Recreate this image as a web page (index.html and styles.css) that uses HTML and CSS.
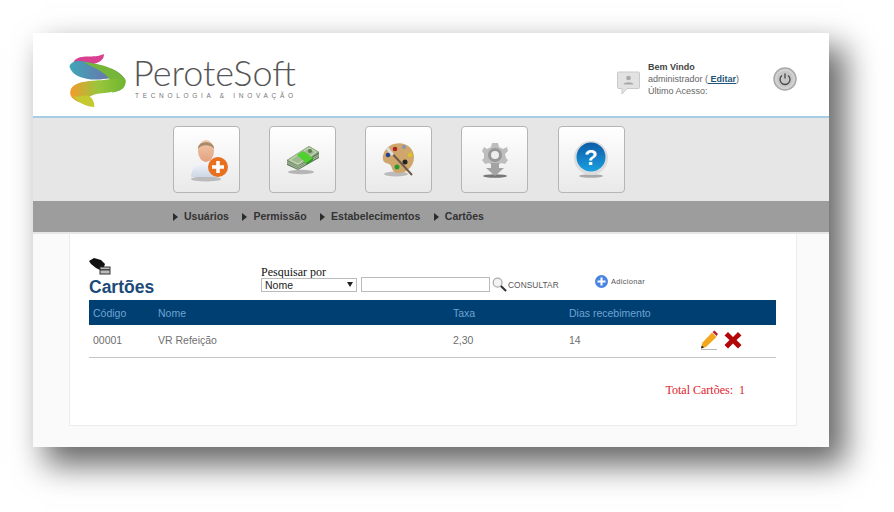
FILE: index.html
```html
<!DOCTYPE html>
<html lang="pt">
<head>
    <meta charset="UTF-8">
    <title>PeroteSoft - Cartões</title>
    <link rel="stylesheet" href="styles.css">
</head>
<body>
<div class="window">
    <header class="top">
        <div class="logo">
            <svg class="logo-mark" width="60" height="54" viewBox="3 0 55 52">
                <defs>
                    <linearGradient id="lgBlue" x1="0" y1="0" x2="1" y2="0">
                        <stop offset="0" stop-color="#3fa6b8"/>
                        <stop offset="1" stop-color="#7c62a8"/>
                    </linearGradient>
                    <linearGradient id="lgGreen" x1="0" y1="0" x2="1" y2="0">
                        <stop offset="0" stop-color="#f39a2c"/>
                        <stop offset="0.5" stop-color="#9ac63c"/>
                        <stop offset="1" stop-color="#6fb52f"/>
                    </linearGradient>
                </defs>
                <path d="M7 8 C14 0 26 6 36 1 C37 5 33 9 28 10 L12 13 Z" fill="#d9408f"/>
                <path d="M3 13 C5 6 16 7 26 10 C40 14 53 17 57 26 C50 24 44 24 36 25 C22 27 6 24 3 13 Z" fill="url(#lgBlue)"/>
                <path d="M16 9 C30 10 50 14 57 26 C58 34 52 37 44 38 C48 30 42 20 16 9 Z" fill="#74b53a"/>
                <path d="M57 26 C57 36 44 38 32 39 C24 40 18 43 20 50 C11 47 2 44 4 36 C7 27 22 27 36 26 C44 25 51 24 57 26 Z" fill="url(#lgGreen)"/>
                <path d="M17 41 C24 40 27 46 27 52 C20 52 11 48 6 41 C9 43 13 42 17 41 Z" fill="#c3c92f"/>
            </svg>
            <div class="logo-text">
                <div class="logo-name">PeroteSoft</div>
                <div class="logo-tag">TECNOLOGIA &amp; INOVAÇÃO</div>
            </div>
        </div>
        <div class="user">
            <svg class="user-icon" width="23" height="24" viewBox="0 0 23 24">
                <path d="M1.5 1 H21.5 A1 1 0 0 1 22.500 2 V16.500 A1 1 0 0 1 21.500 17.500 H10 L5 23 V17.500 H1.500 A1 1 0 0 1 0.500 16.500 V2 A1 1 0 0 1 1.500 1 Z" fill="#e2e2e2" stroke="#c9c9c9"/>
                <circle cx="11.500" cy="7" r="2.300" fill="#a9a9a9"/>
                <path d="M6.500 13.500 C7 10.500 16 10.500 16.500 13.500 Z" fill="#a9a9a9"/>
            </svg>
            <div class="user-text">
                <div class="user-hello">Bem Vindo</div>
                <div>administrador (<a class="user-link" href="#">&nbsp;Editar</a>)</div>
                <div>Último Acesso:</div>
            </div>
            <svg class="power" width="24" height="24" viewBox="0 0 24 24">
                <circle cx="12" cy="12" r="11" fill="#d2d2d2" stroke="#a9a9a9" stroke-width="1.500"/>
                <circle cx="12" cy="12" r="8" fill="#c6c6c6"/>
                <path d="M9 8.500 A5 5 0 1 0 15 8.500" fill="none" stroke="#444" stroke-width="1.300"/>
                <path d="M12 6.500 V11.500" stroke="#444" stroke-width="1.300"/>
            </svg>
        </div>
    </header>

    <div class="band">
        <a class="tile" href="#">
            <svg width="44" height="46" viewBox="0 0 44 46">
                <defs>
                    <linearGradient id="lgFace" x1="0" y1="0" x2="0" y2="1">
                        <stop offset="0" stop-color="#f3c9ac"/>
                        <stop offset="1" stop-color="#e2a27f"/>
                    </linearGradient>
                    <linearGradient id="lgBody" x1="0" y1="0" x2="0" y2="1">
                        <stop offset="0" stop-color="#f2f5fa"/>
                        <stop offset="1" stop-color="#cdd6e6"/>
                    </linearGradient>
                </defs>
                <ellipse cx="21" cy="42" rx="15" ry="2.500" fill="#bbb"/>
                <path d="M6 40 C6 30 14 26 21 26 C29 26 33 32 33 40 Z" fill="url(#lgBody)"/>
                <ellipse cx="21" cy="14" rx="8" ry="11" fill="url(#lgFace)"/>
                <path d="M13 12 C12 3 30 3 29 12 C26 7 16 7 13 12 Z" fill="#a58a6c"/>
                <circle cx="33" cy="30" r="10" fill="#e8701f"/>
                <path d="M33 24 V36 M27 30 H39" stroke="#fff" stroke-width="3.500"/>
            </svg>
        </a>
        <a class="tile" href="#">
            <svg width="34" height="30" viewBox="0 0 34 30">
                <ellipse cx="15" cy="27" rx="13" ry="2.200" fill="#b5b5b5"/>
                <path d="M1 15 L23 1 L33 7 V13 L12 25 L1 20 Z" fill="#5f7a58"/>
                <path d="M1 16.500 L12 22 L33 9.500 M1 18 L12 23.500 L33 11" fill="none" stroke="#c8d8bd" stroke-width="0.700"/>
                <path d="M1 15 L23 1 L33 7 L12 21 Z" fill="#9fb98e"/>
                <path d="M4 15 L23 3 L30 7 L12 19 Z" fill="none" stroke="#dfe9d5" stroke-width="0.700"/>
                <path d="M11 10 L17 6 L27 13 L20 18 Z" fill="#4fd02e"/>
                <path d="M20 18 L27 13 V15 L20 20 Z" fill="#2f9a1c"/>
                <circle cx="24" cy="6" r="2" fill="#5d7a50"/>
            </svg>
        </a>
        <a class="tile" href="#">
            <svg width="34" height="36" viewBox="0 0 34 36">
                <ellipse cx="14" cy="32" rx="12" ry="2.500" fill="#bbb"/>
                <path d="M12 2 C22 -1 32 5 32 15 C32 25 24 32 15 31 C9 30 11 24 7 22 C3 21 0 20 1 14 C2 8 7 3 12 2 Z" fill="#cfa76c"/>
                <circle cx="13" cy="7" r="2.300" fill="#b32020"/>
                <circle cx="22" cy="5" r="2" fill="#8a94b8"/>
                <circle cx="28" cy="13" r="2.300" fill="#d9c22a"/>
                <circle cx="23" cy="20" r="2.500" fill="#222"/>
                <circle cx="15" cy="25" r="2.500" fill="#2a9a33"/>
                <circle cx="6" cy="13" r="2.300" fill="#27408f"/>
                <path d="M6 7 L30 33" stroke="#6e5a48" stroke-width="2"/>
                <path d="M5 6 L11 13" stroke="#ddd" stroke-width="3"/>
            </svg>
        </a>
        <a class="tile" href="#">
            <svg width="28" height="38" viewBox="0 0 28 38">
                <ellipse cx="14" cy="35" rx="12" ry="1.800" fill="#777"/>
                <path d="M14 2 L17 2 L18 6 L22 8 L26 6 L27 10 L24 13 L25 17 L27 19 L24 23 L20 22 L17 24 H11 L8 22 L4 23 L1 19 L3 17 L3 13 L1 10 L3 6 L6 8 L10 6 L11 2 Z" fill="#bdbdbd"/>
                <circle cx="14" cy="14" r="7" fill="#979797"/>
                <circle cx="14" cy="14" r="4" fill="#eee"/>
                <path d="M10 22 H18 V27 H23 L14 35 L5 27 H10 Z" fill="#a3a3a3"/>
            </svg>
        </a>
        <a class="tile" href="#">
            <svg width="36" height="38" viewBox="0 0 36 38">
                <defs>
                    <linearGradient id="lgHelp" x1="0" y1="0" x2="0" y2="1">
                        <stop offset="0" stop-color="#0d5ba8"/>
                        <stop offset="1" stop-color="#1aa0e0"/>
                    </linearGradient>
                </defs>
                <ellipse cx="18" cy="35" rx="12" ry="1.800" fill="#aaa"/>
                <circle cx="18" cy="17" r="17" fill="#dcdcdc"/>
                <circle cx="18" cy="16" r="14.500" fill="url(#lgHelp)"/>
                <text class="help-mark" x="18" y="24" text-anchor="middle">?</text>
            </svg>
        </a>
    </div>

    <nav class="menu">
        <a class="menu-item" href="#">Usuários</a>
        <a class="menu-item" href="#">Permissão</a>
        <a class="menu-item" href="#">Estabelecimentos</a>
        <a class="menu-item" href="#">Cartões</a>
    </nav>

    <main class="content">
        <section class="panel">
            <div class="toolbar">
                <div class="page-title">
                    <svg width="22" height="17" viewBox="0 0 22 17">
                        <path d="M0 3 L5 0 L12 2 L16 6 L15 9 L11 9 L11 12 L7 10 L2 6 Z" fill="#111"/>
                        <rect x="11" y="9" width="10" height="7" fill="#bbb" stroke="#333"/>
                        <rect x="11" y="11" width="10" height="1.500" fill="#444"/>
                    </svg>
                    <h1>Cartões</h1>
                </div>
                <form class="search">
                    <label class="search-label" for="campo">Pesquisar por</label>
                    <div class="search-row">
                        <select class="search-select" id="campo">
                            <option>Nome</option>
                        </select>
                        <input class="search-input" type="text">
                        <svg class="search-icon" width="15" height="15" viewBox="0 0 16 16">
                            <circle cx="6" cy="6" r="4.700" fill="#f3f3f3" stroke="#aaa" stroke-width="1.300"/>
                            <path d="M9.500 9.500 L15 15" stroke="#333" stroke-width="2.200"/>
                        </svg>
                        <span class="search-go">CONSULTAR</span>
                    </div>
                </form>
                <a class="add" href="#">
                    <svg width="13" height="13" viewBox="0 0 13 13">
                        <circle cx="6.500" cy="6.500" r="6.500" fill="#4a83e0"/>
                        <path d="M6.500 2.500 V10.500 M2.500 6.500 H10.500" stroke="#fff" stroke-width="2"/>
                    </svg>
                    <span>Adicionar</span>
                </a>
            </div>

            <table class="grid">
                <thead>
                    <tr>
                        <th class="col-code">Código</th>
                        <th class="col-name">Nome</th>
                        <th class="col-rate">Taxa</th>
                        <th class="col-days">Dias recebimento</th>
                        <th></th>
                    </tr>
                </thead>
                <tbody>
                    <tr>
                        <td>00001</td>
                        <td>VR Refeição</td>
                        <td>2,30</td>
                        <td>14</td>
                        <td class="actions">
                            <svg class="edit-icon" width="18" height="20" viewBox="0 0 18 20">
                                <path d="M1 19.500 H17" stroke="#bbb"/>
                                <path d="M12 2.500 L16.500 7 L6 17 L1 18.500 L2.500 12.500 Z" fill="#f2a71f"/>
                                <path d="M12.500 2 L14.500 0.500 L18 4 L16.500 6 Z" fill="#b5202a"/>
                                <path d="M1 18.500 L1.800 15.500 L4 17.500 Z" fill="#222"/>
                            </svg>
                            <svg width="18" height="18" viewBox="0 0 18 18">
                                <path d="M4 1 L9 6 L14 1 L17.500 4.500 L12.500 9 L17.500 14 L14 17.500 L9 12.500 L4 17.500 L0.500 14 L5.500 9 L0.500 4.500 Z" fill="#b30606"/>
                            </svg>
                        </td>
                    </tr>
                </tbody>
            </table>

            <div class="total">Total Cartões:&nbsp; 1</div>
        </section>
    </main>
</div>
</body>
</html>
```

FILE: styles.css
```css
html, body {
    margin: 0;
    height: 100%;
    overflow: hidden;
    background-color: #fff;
}

.window {
    position: relative;
    display: flex;
    flex-direction: column;
    width: 796px;
    height: 414px;
    margin: 33px 0 0 33px;
    font-family: "Liberation Sans", Arial, sans-serif;
    box-shadow: 14px 16px 30px 2px rgba(0, 0, 0, 0.6);
}

.top {
    display: flex;
    justify-content: space-between;
    align-items: center;
    height: 83px;
    background-color: #fff;
    border-bottom: 2px solid #a6cde3;
}

.logo {
    display: flex;
    align-items: center;
    gap: 5px;
    margin-left: 35px;
    padding-top: 10px;
}

.logo-text {
    color: #555;
    margin-bottom: 8px;
}

.logo-name {
    font-family: Lato, sans-serif;
    font-weight: 300;
    font-size: 36px;
    line-height: 38px;
}

.logo-tag {
    font-family: "Liberation Sans", sans-serif;
    font-size: 6.500px;
    letter-spacing: 3.700px;
    color: #777;
    line-height: 8px;
    margin: 1px 0 -1px 2px;
}

.user {
    display: flex;
    align-items: center;
    margin: 8px 32px 0 0;
    font-size: 9px;
    line-height: 12px;
    color: #666;
}

.user-icon {
    margin: 8px 8px 0 0;
}

.user-hello {
    font-weight: bold;
    color: #444;
}

.user-link {
    color: #1f5578;
    font-weight: bold;
}

.power {
    margin-left: 34px;
}

.band {
    display: flex;
    gap: 29.150px;
    height: 83px;
    padding: 8px 0 0 140px;
    box-sizing: border-box;
    background-color: #e6e6e6;
}

.tile {
    display: flex;
    align-items: center;
    justify-content: center;
    width: 65px;
    height: 65px;
    border: 1px solid #b5b5b5;
    border-radius: 4px;
    background: linear-gradient(#fff, #e9e9e9);
}

.help-mark {
    font-family: "Liberation Sans", sans-serif;
    font-weight: bold;
    font-size: 22px;
    fill: #fff;
}

.menu {
    display: flex;
    align-items: center;
    gap: 13.500px;
    height: 29px;
    padding: 0 0 2px 140px;
    background-color: #9d9d9d;
}

.menu-item {
    font-size: 10.500px;
    font-weight: bold;
    color: #333;
    text-decoration: none;
}

.menu-item::before {
    content: "";
    display: inline-block;
    margin-right: 6px;
    border-left: 5px solid #2c2c2c;
    border-top: 4px solid transparent;
    border-bottom: 4px solid transparent;
    vertical-align: -1px;
}

.content {
    flex: 1;
    padding: 0 32px 21px 36px;
    background-color: #fafafa;
    border-top: 2px solid #e6e6e6;
}

.panel {
    height: 100%;
    box-sizing: border-box;
    padding: 25px 20px 0 19px;
    background-color: #fff;
    border: 1px solid #ececec;
    border-top: 0;
}

.toolbar {
    display: flex;
    align-items: flex-end;
    height: 39px;
}

.page-title {
    width: 172px;
}

.page-title svg {
    display: block;
    margin-bottom: 2px;
}

.page-title h1 {
    margin: 0;
    font-size: 17.500px;
    line-height: 21px;
    color: #1b4a78;
}

.search {
    width: 334px;
    margin-bottom: 6px;
}

.search-label {
    display: block;
    font-family: "Liberation Serif", serif;
    font-size: 12px;
    line-height: 9px;
    color: #111;
}

.search-row {
    display: flex;
    align-items: center;
}

.search-select {
    appearance: none;
    width: 96px;
    height: 14px;
    padding: 0 0 0 3px;
    font-family: "Liberation Sans", sans-serif;
    font-size: 10.500px;
    color: #222;
    background: #fff url("data:image/svg+xml,%3Csvg xmlns='http://www.w3.org/2000/svg' width='6' height='5'%3E%3Cpath d='M0 0H6L3 5Z' fill='%23222'/%3E%3C/svg%3E") no-repeat right 3px center;
    border: 1px solid #bbb;
    border-radius: 0;
}

.search-input {
    width: 127px;
    height: 13px;
    padding: 0;
    margin-left: 4px;
    border: 1px solid #bbb;
}

.search-icon {
    margin-left: 2px;
}

.search-go {
    margin-left: 1px;
    font-size: 8.300px;
    letter-spacing: 0.100px;
    color: #555;
}

.add {
    display: flex;
    align-items: center;
    gap: 3px;
    margin-bottom: 10px;
    font-size: 7.500px;
    letter-spacing: 0.300px;
    color: #555;
    text-decoration: none;
}

.grid {
    width: 100%;
    margin-top: 2px;
    border-collapse: collapse;
    font-size: 10.500px;
}

.grid th {
    height: 25px;
    padding: 0 0 0 4px;
    text-align: left;
    font-weight: normal;
    color: #6fa3d3;
    background-color: #003f72;
}

.grid td {
    height: 30px;
    padding: 0 0 2px 4px;
    color: #6f6f6f;
    border-bottom: 1px solid #c4c4c4;
}

.col-code {
    width: 61px;
}

.col-name {
    width: 291px;
}

.col-rate {
    width: 112px;
}

.col-days {
    width: 129px;
}

.grid .actions {
    padding-left: 2px;
    white-space: nowrap;
}

.actions svg {
    vertical-align: middle;
}

.edit-icon {
    margin-right: 3px;
}

.total {
    margin: 25px 31px 0 0;
    text-align: right;
    font-family: "Liberation Serif", serif;
    font-size: 12px;
    color: #e0202a;
}
```
